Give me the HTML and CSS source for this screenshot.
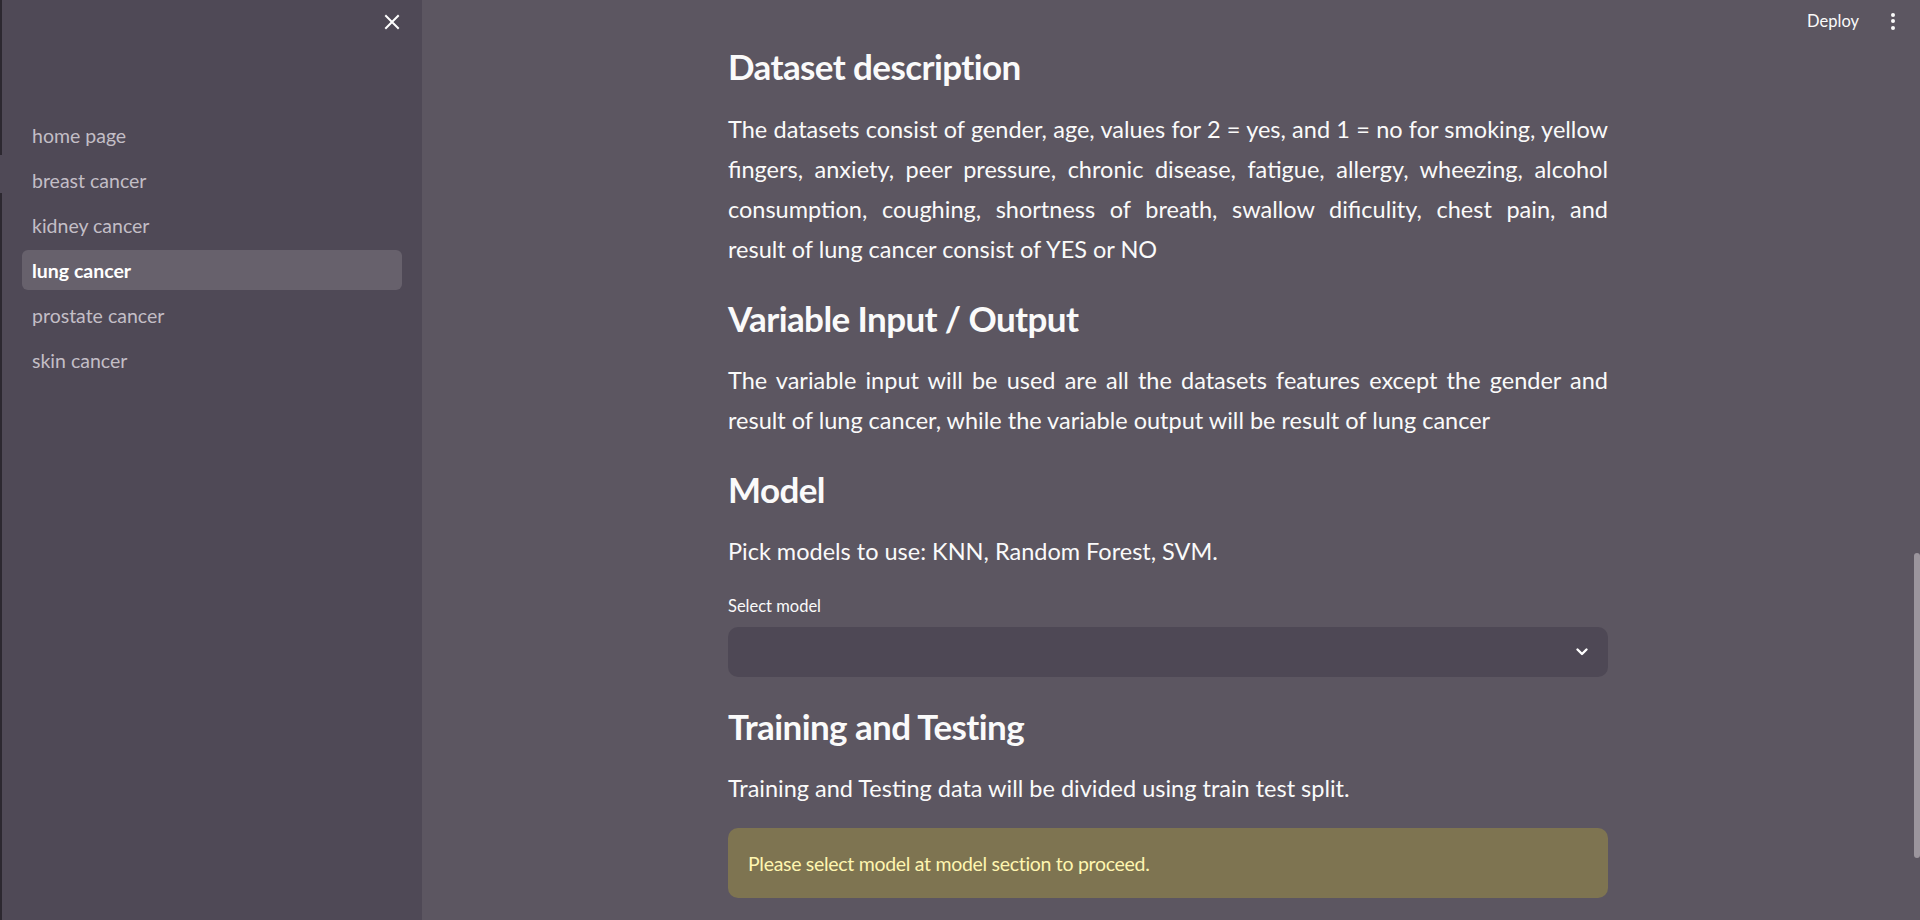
FILE: index.html
```html
<!DOCTYPE html>
<html lang="en">
<head>
<meta charset="utf-8">
<title>lung cancer</title>
<link rel="stylesheet" href="styles.css">
</head>
<body>
<div class="app">
  <aside class="sidebar">
    <div class="edge"></div>
    <div class="sidebar-inner">
      <div class="sidebar-top">
        <button class="close-btn" aria-label="Close sidebar">
          <svg width="16" height="16" viewBox="0 0 16 16"><path d="M2 2 L14 14 M14 2 L2 14" stroke="#ffffff" stroke-width="2" stroke-linecap="square"/></svg>
        </button>
      </div>
      <nav class="nav">
        <a class="nav-item">home page</a>
        <a class="nav-item">breast cancer</a>
        <a class="nav-item">kidney cancer</a>
        <a class="nav-item active">lung cancer</a>
        <a class="nav-item">prostate cancer</a>
        <a class="nav-item">skin cancer</a>
      </nav>
    </div>
  </aside>
  <main class="main">
    <header class="toolbar">
      <span class="deploy">Deploy</span>
      <span class="kebab"><i></i><i></i><i></i></span>
    </header>
    <div class="content">
      <h3 class="heading first">Dataset description</h3>
      <p class="text">The datasets consist of gender, age, values for 2 = yes, and 1 = no for smoking, yellow fingers, anxiety, peer pressure, chronic disease, fatigue, allergy, wheezing, alcohol consumption, coughing, shortness of breath, swallow dificulity, chest pain, and result&nbsp;of lung cancer consist of YES or NO</p>
      <h3 class="heading">Variable Input / Output</h3>
      <p class="text">The variable input will be used are all the datasets features except the gender and result of lung cancer, while the variable output will be result of lung cancer</p>
      <h3 class="heading">Model</h3>
      <p class="text">Pick models to use: KNN, Random Forest, SVM.</p>
      <div class="field">
        <label class="field-label">Select model</label>
        <div class="select">
          <svg class="chevron" width="14" height="10" viewBox="0 0 14 10"><path d="M2.5 2.5 L7 7 L11.5 2.5" fill="none" stroke="#ffffff" stroke-width="2.4" stroke-linecap="round" stroke-linejoin="round"/></svg>
        </div>
      </div>
      <h3 class="heading">Training and Testing</h3>
      <p class="text">Training and Testing data will be divided using train test split.</p>
      <div class="alert">Please select model at model section to proceed.</div>
    </div>
    <div class="scrollbar"></div>
  </main>
</div>
</body>
</html>
```
FILE: styles.css
```css
html, body {
  margin: 0;
  padding: 0;
  height: 100%;
  overflow: hidden;
}
body {
  font-family: "Lato", "Noto Sans", sans-serif;
  background: #5c5661;
  color: #fafafa;
}
.app {
  display: flex;
  height: 920px;
}
.sidebar {
  width: 422px;
  flex: 0 0 422px;
  display: flex;
  background: #4f4956;
}
.edge {
  width: 2px;
  flex: 0 0 2px;
  background: linear-gradient(to bottom, #2c2830 0, #2c2830 155px, #4f4956 155px, #4f4956 193px, #2c2830 193px);
}
.sidebar-inner {
  flex: 1;
  display: flex;
  flex-direction: column;
}
.sidebar-top {
  display: flex;
  justify-content: flex-end;
  padding: 14px 22px 0 0;
  height: 102px;
  box-sizing: border-box;
}
.close-btn {
  background: none;
  border: none;
  padding: 0;
  width: 16px;
  height: 16px;
  cursor: pointer;
}
.nav {
  display: flex;
  flex-direction: column;
  gap: 5px;
  padding: 13px 20px 0 20px;
}
.nav-item {
  display: flex;
  align-items: center;
  height: 40px;
  padding-left: 10px;
  border-radius: 6px;
  font-size: 19.5px;
  color: #c3bec6;
}
.nav-item.active {
  background: #67616c;
  color: #ffffff;
  font-weight: 700;
}
.main {
  flex: 1;
  position: relative;
  display: flex;
  justify-content: center;
  padding-right: 6px;
}
.toolbar {
  position: absolute;
  top: 0;
  right: 0;
  height: 42px;
  display: flex;
  align-items: center;
  gap: 32px;
  padding-right: 25px;
}
.deploy {
  font-size: 16.5px;
  color: #fafafa;
}
.kebab {
  display: flex;
  flex-direction: column;
  gap: 2.5px;
}
.kebab i {
  display: block;
  width: 4px;
  height: 4px;
  border-radius: 50%;
  background: #fafafa;
}
.content {
  width: 880px;
  padding-top: 44px;
  display: flex;
  flex-direction: column;
}
.heading {
  margin: 7px 0 20px;
  font-size: 35px;
  line-height: 44px;
  font-weight: 700;
  letter-spacing: -0.6px;
}
.heading.first {
  margin-top: 0;
  margin-bottom: 21px;
}
.text {
  margin: 0 0 20px;
  font-size: 23.5px;
  line-height: 40px;
  text-align: justify;
  letter-spacing: 0;
}
.field {
  margin-top: 3px;
  margin-bottom: 20px;
}
.field-label {
  display: block;
  font-size: 16.5px;
  line-height: 24px;
  margin-bottom: 9px;
}
.select {
  height: 50px;
  border-radius: 10px;
  background: #4e4855;
  display: flex;
  align-items: center;
  justify-content: flex-end;
  padding-right: 19px;
}
.alert {
  height: 70px;
  flex: 0 0 70px;
  box-sizing: border-box;
  border-radius: 10px;
  background: #7e7451;
  color: #fff6b0;
  font-size: 19.5px;
  letter-spacing: -0.3px;
  display: flex;
  align-items: center;
  padding-left: 20px;
}
.scrollbar {
  position: absolute;
  right: 0;
  top: 553px;
  width: 6px;
  height: 305px;
  border-radius: 3px;
  background: #9b959d;
}
```
